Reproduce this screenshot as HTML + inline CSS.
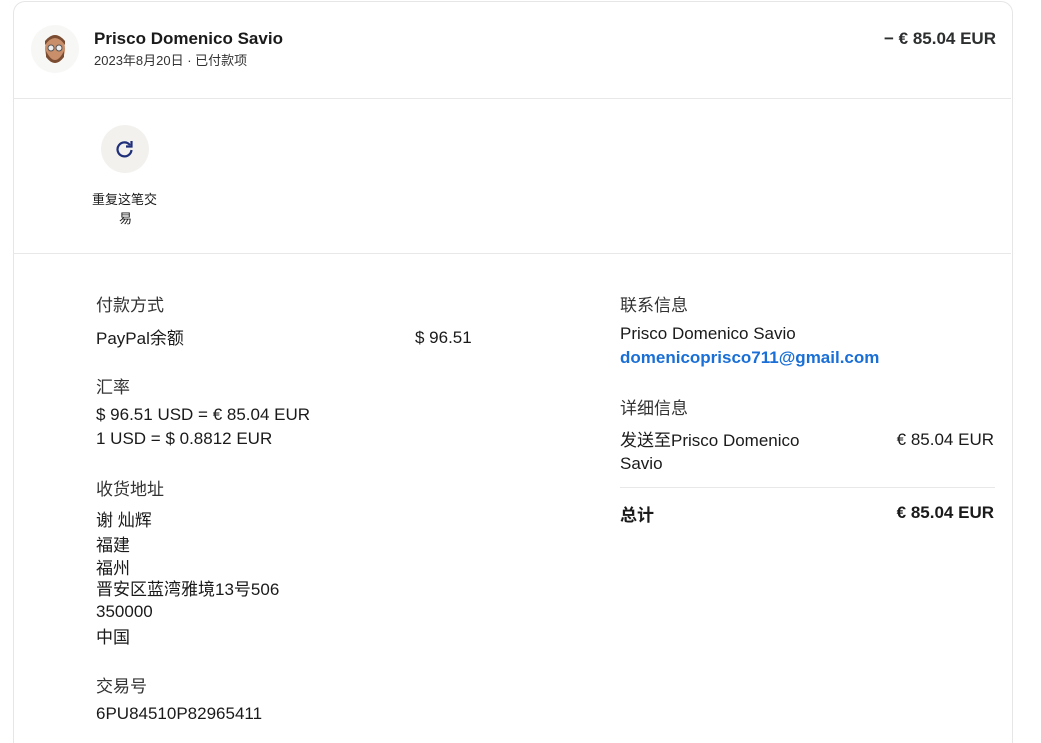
<!DOCTYPE html>
<html><head><meta charset="utf-8"><style>
html,body{margin:0;width:1041px;height:743px;overflow:hidden}
body{background:#fff;font-family:"Liberation Sans","Noto Sans CJK SC",sans-serif;color:#1a1a1a;position:relative}
.wrap{position:absolute;left:0;top:0;width:1041px;height:743px;overflow:hidden}
.card{position:absolute;left:13px;top:1px;width:998px;height:742px;border:1px solid #e6e6e6;border-bottom:none;border-radius:12px 12px 0 0}
.t{position:absolute;white-space:nowrap;font-size:17px;line-height:20px}
.hr{position:absolute;height:1px;background:#e8e8e8}
.b{font-weight:bold}
.lbl{color:#333}
</style></head><body><div class="wrap">
<div class="card"></div>
<div class="hr" style="left:14px;width:997px;top:98px"></div>
<div class="hr" style="left:14px;width:997px;top:253px"></div>
<div style="position:absolute;left:31px;top:25px;width:48px;height:48px;border-radius:50%;background:#f7f7f5"></div>
<svg style="position:absolute;left:43px;top:31px" width="24" height="36" viewBox="0 0 24 36"><ellipse cx="12" cy="18" rx="10" ry="14" fill="#c98e6a"/><path d="M2 14 Q12 0 22 14 L22 10 Q12 -2 2 10Z" fill="#7a4d33"/><path d="M3 20 Q12 38 21 20 L21 26 Q12 38 3 26Z" fill="#7a4d33"/><circle cx="8" cy="17" r="3" fill="#eee" stroke="#555"/><circle cx="16" cy="17" r="3" fill="#eee" stroke="#555"/></svg>
<div class="t b" style="left:94px;top:29px">Prisco Domenico Savio</div>
<div class="t" style="left:94px;top:52px;font-size:13px;line-height:18px;color:#333">2023年8月20日 · 已付款项</div>
<div class="t b" style="right:45px;top:29px;color:#2c2e2f">− € 85.04 EUR</div>
<div style="position:absolute;left:101px;top:125px;width:48px;height:48px;border-radius:50%;background:#f2f1ee"></div>
<svg style="position:absolute;left:114px;top:138px" width="22" height="22" viewBox="0 0 22 22"><path d="M16 7 A7 7 0 1 0 17.5 12" fill="none" stroke="#1f2f7a" stroke-width="2.2"/><path d="M17.5 3 L17.5 8.5 L12 8.5" fill="none" stroke="#1f2f7a" stroke-width="2.2"/></svg>
<div class="t" style="left:92px;top:191px;font-size:13px;line-height:18px">重复这笔交</div>
<div class="t" style="left:119px;top:210px;font-size:13px;line-height:18px">易</div>

<div class="t lbl" style="left:96px;top:296px">付款方式</div>
<div class="t" style="left:96px;top:329px">PayPal余额</div>
<div class="t" style="left:415px;top:328px">$ 96.51</div>
<div class="t lbl" style="left:96px;top:378px">汇率</div>
<div class="t" style="left:96px;top:405px">$ 96.51 USD = € 85.04 EUR</div>
<div class="t" style="left:96px;top:429px">1 USD = $ 0.8812 EUR</div>
<div class="t lbl" style="left:96px;top:480px">收货地址</div>
<div class="t" style="left:96px;top:511px">谢 灿辉</div>
<div class="t" style="left:96px;top:536px">福建</div>
<div class="t" style="left:96px;top:559px">福州</div>
<div class="t" style="left:96px;top:580px">晋安区蓝湾雅境13号506</div>
<div class="t" style="left:96px;top:602px">350000</div>
<div class="t" style="left:96px;top:628px">中国</div>
<div class="t lbl" style="left:96px;top:677px">交易号</div>
<div class="t" style="left:96px;top:704px">6PU84510P82965411</div>

<div class="t lbl" style="left:620px;top:296px">联系信息</div>
<div class="t" style="left:620px;top:324px">Prisco Domenico Savio</div>
<div class="t b" style="left:620px;top:348px;color:#1a6fd6">domenicoprisco711@gmail.com</div>
<div class="t lbl" style="left:620px;top:399px">详细信息</div>
<div class="t" style="left:620px;top:431px">发送至Prisco Domenico</div>
<div class="t" style="left:620px;top:454px">Savio</div>
<div class="t" style="right:47px;top:430px">€ 85.04 EUR</div>
<div class="hr" style="left:620px;width:375px;top:487px"></div>
<div class="t b" style="left:620px;top:506px">总计</div>
<div class="t b" style="right:47px;top:503px">€ 85.04 EUR</div>
</div></body></html>
